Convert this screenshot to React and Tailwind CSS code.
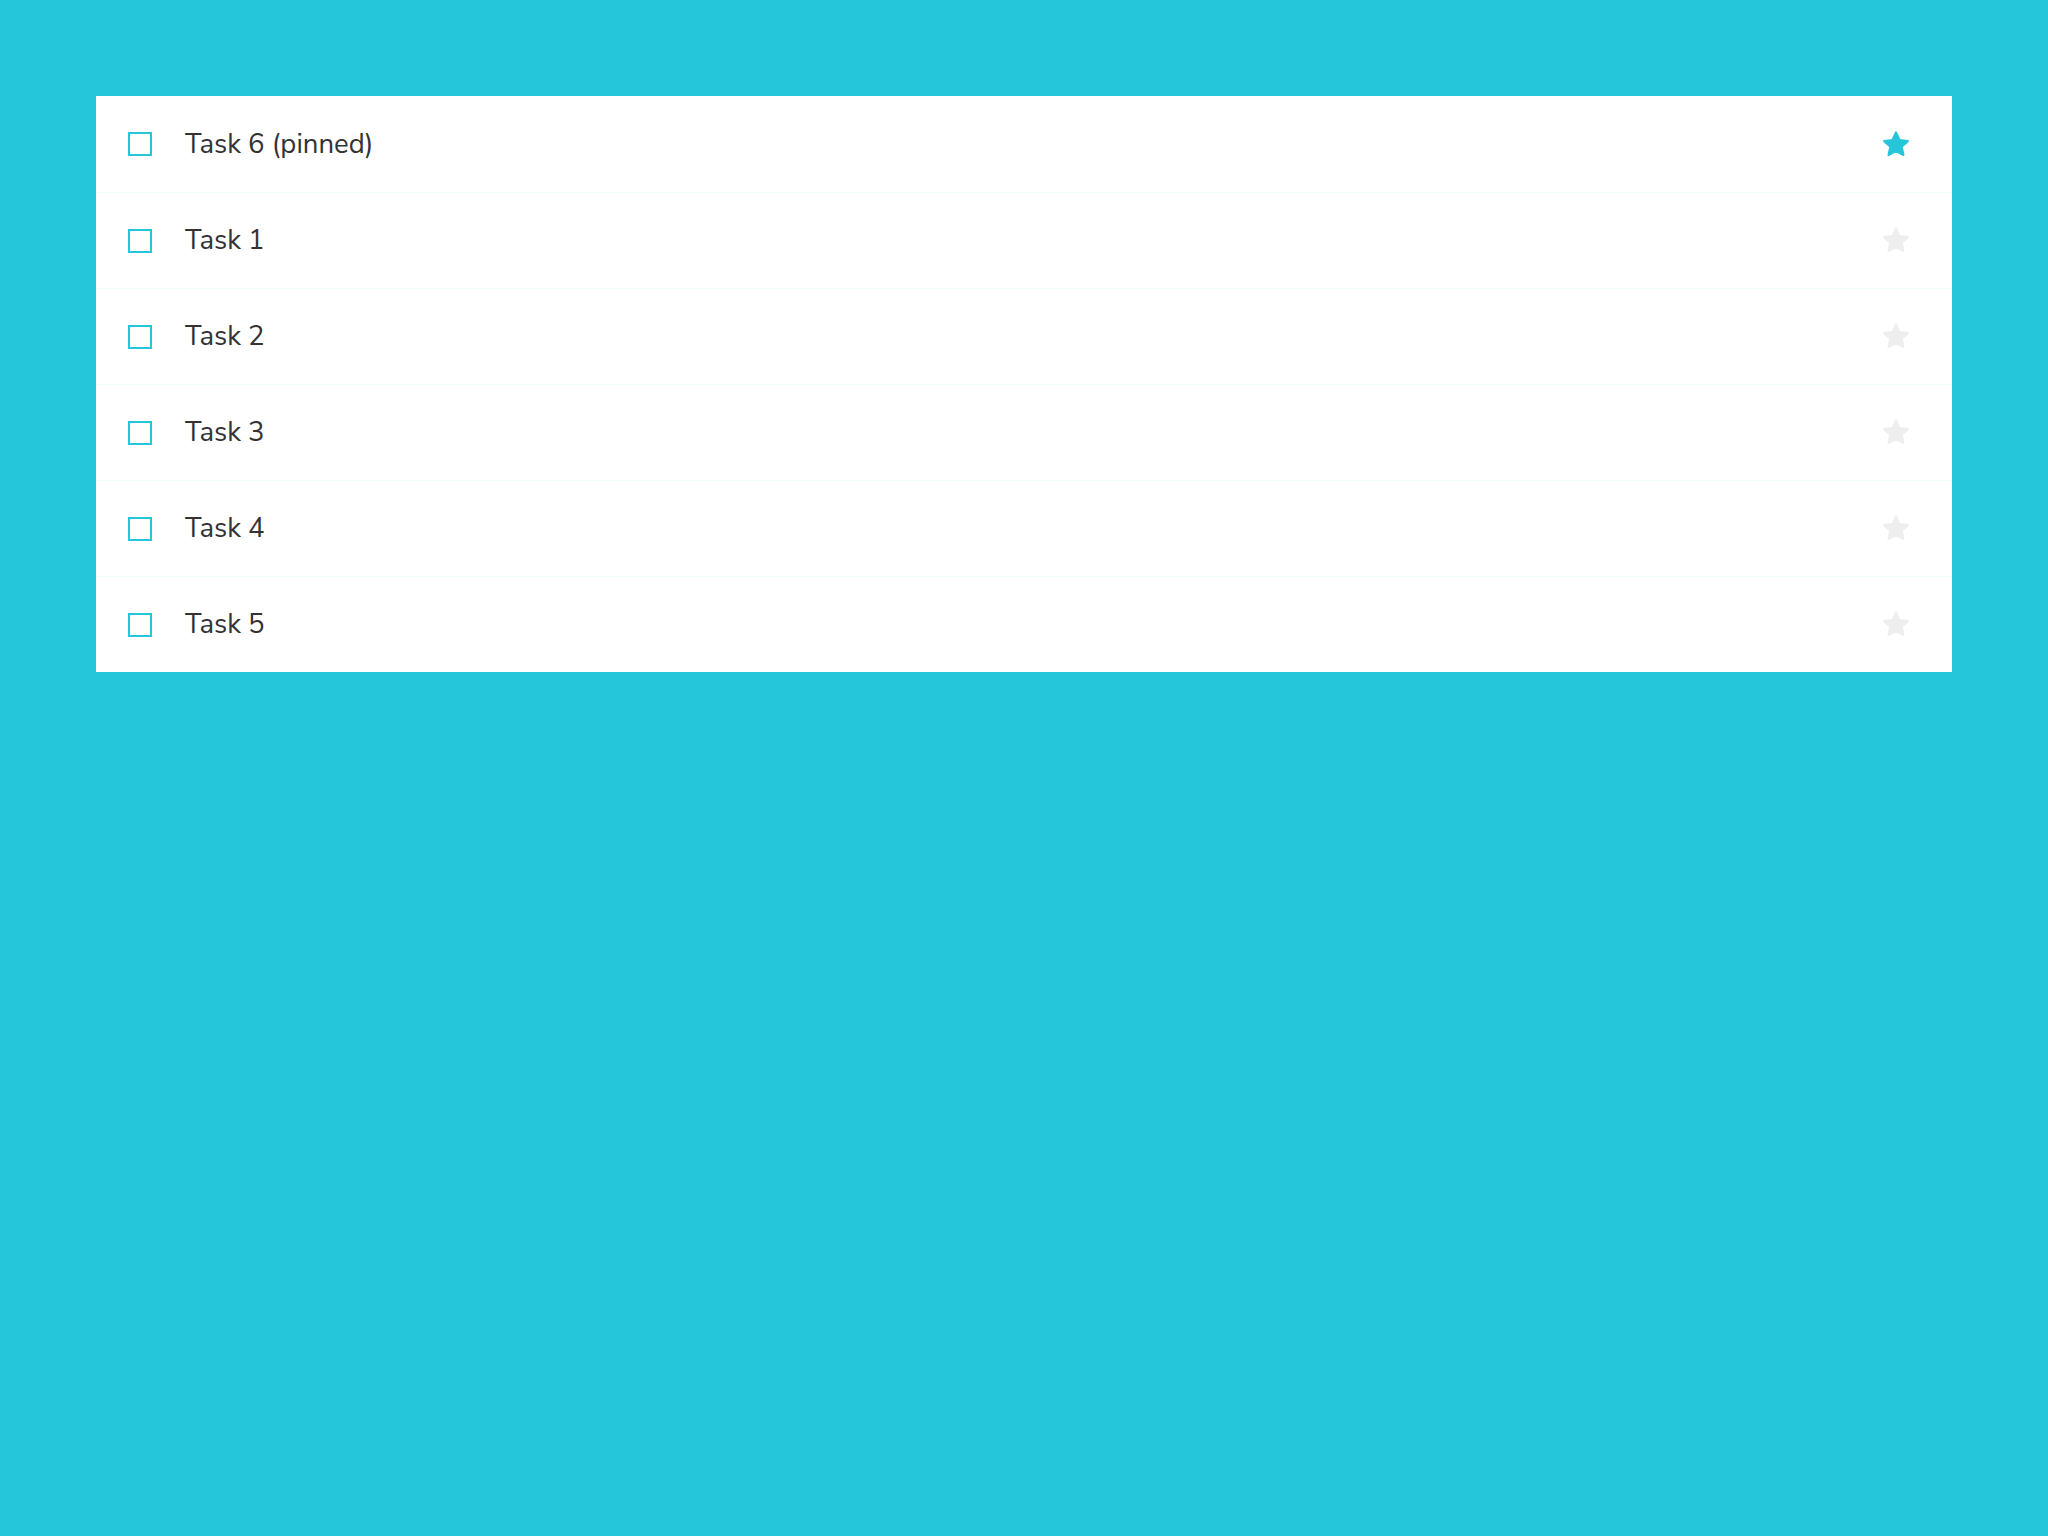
import React from "react";

const tasks = [
  { title: "Task 6 (pinned)", pinned: true },
  { title: "Task 1" },
  { title: "Task 2" },
  { title: "Task 3" },
  { title: "Task 4" },
  { title: "Task 5" },
];

function Star({ active }) {
  const c = active ? "#26c6da" : "#eeeeee";
  return (
    <svg width="30" height="29" viewBox="0 0 30 29" className="block">
      <path
        d="M15 2.5 L18.6 10.2 L26.8 11.1 L20.7 16.8 L22.4 25 L15 20.8 L7.6 25 L9.3 16.8 L3.2 11.1 L11.4 10.2 Z"
        fill={c}
        stroke={c}
        strokeWidth="2.2"
        strokeLinejoin="round"
      />
    </svg>
  );
}

export default function App() {
  return (
    <div
      className="min-h-screen w-full bg-[#26c6da] p-24"
      style={{ fontFamily: "'Nunito Sans', Lato, 'Open Sans', sans-serif" }}
    >
      <div className="bg-white flex flex-col">
        {tasks.map((t, i) => (
          <div
            key={i}
            className={`h-24 flex items-center pl-8 pr-[41px] ${i > 0 ? "border-t border-[#f0fbfc]" : ""}`}
          >
            <div className="w-6 h-6 border-2 border-[#26c6da] shrink-0" />
            <div className="ml-[33px] flex-1 text-[27.5px] text-[#333333] leading-none pt-[1px]">
              {t.title}
            </div>
            <Star active={t.pinned} />
          </div>
        ))}
      </div>
    </div>
  );
}
